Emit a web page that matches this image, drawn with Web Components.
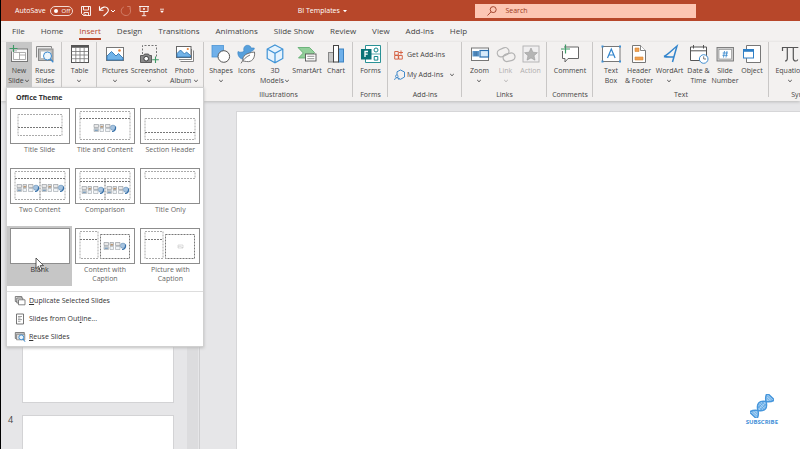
<!DOCTYPE html>
<html lang="en">
<head>
<meta charset="utf-8">
<title>BI Templates</title>
<style>
  html, body { margin: 0; height: 100%; overflow: hidden; }
  body {
    font: 7px/10px "Open Sans", "Noto Sans", sans-serif;
    color: #444;
    --brand: #b7472a;
    --bar: #f3f1f0;
    --work: #e6e6e8;
    --hover: #c6c6c6;
  }
</style>
</head>
<body>
<deck-app></deck-app>

<script>
const ICONS = {
  save: ['0 0 12 12', '<g fill="none" stroke="#fff" stroke-width=".9"><path d="M1.500 1.500h9v9h-7l-2-2z"/><path d="M3.500 1.500v3.500h5V1.500M4 10.500V7.500h4.500v3M5.800 10.500v-1.500"/></g>'],
  undo: ['0 0 12 12', '<g fill="none" stroke="#fff" stroke-width="1.100"><path d="M1.500 1.300v4h4"/><path d="M1.800 5C4 1.800 8 1 9.700 3.300s.3 4.500-4.200 7.700"/></g>'],
  redo: ['0 0 12 12', '<g fill="none" stroke="#d27f69" stroke-width="1"><path d="M7.200 1.500h3v3"/><path d="M10 3.500c1.600 3.500-.5 7-3.800 7S.8 8 1.300 5.200C1.600 3.500 2.600 2.500 3.800 2"/></g>'],
  present: ['0 0 12 12', '<g fill="none" stroke="#fff" stroke-width=".9"><path d="M1 1.500h10M2 1.500v5h8v-5M6 6.500v4M3.800 10.700h4.400M6 3v2M5 4h2"/></g>'],
  more: ['0 0 6 6', '<path d="M1 1.200h4" stroke="#fff" stroke-width=".8"/><path d="M1 2.800h4L3 5z" fill="#fff"/>'],
  caret: ['0 0 6 6', '<path d="M1 2h4L3 4.300z" fill="#fff"/>'],
  chevLight: ['0 0 6 6', '<path d="M1 2l2 2 2-2" fill="none" stroke="#fff"/>'],
  chevron: ['0 0 6 6', '<path d="M1.200 2l1.800 1.700L4.800 2" fill="none" stroke="currentColor" stroke-width=".9"/>'],
  search: ['0 0 12 12', '<g fill="none" stroke="#9c3a22" stroke-width=".9"><circle cx="7.200" cy="4.600" r="3"/><path d="M5 6.900L1.500 10.500"/></g>'],
  newslide: ['0 0 20 20', '<rect x="2.500" y="5" width="16" height="12.500" fill="#fafafa" stroke="#777"/><path d="M4.500 8.500h12v7h-12zM10.500 8.500v7M10.500 11h6" fill="#fff" stroke="#999" stroke-width=".8"/><rect x="1" y="3" width="7" height="4.500" fill="#c6c6c6"/><path d="M4.500 1v7M.5 4.500h8" stroke="#3f9a67" stroke-width="1.100"/>'],
  reuse: ['0 0 20 20', '<path d="M1.500 13.500v-11h15v2" fill="#e9e9e9" stroke="#888"/><rect x="3.500" y="5" width="14.500" height="11.500" fill="#bbb" stroke="#888"/><rect x="6" y="7.500" width="9.500" height="6.500" fill="#fff"/><circle cx="12.500" cy="12" r="4" fill="#eef6fc" stroke="#3d8bd0"/><path d="M15.300 15l3 3.300" stroke="#3d8bd0" stroke-width="1.300"/>'],
  table: ['0 0 20 20', '<rect x="1.500" y="1.500" width="17" height="17" fill="#fff" stroke="#555"/><path d="M1.500 2.500h17" stroke="#555" stroke-width="2.500"/><path d="M1.500 7.500h17M1.500 11h17M1.500 14.700h17M5.800 3v15.500M10 3v15.500M14.200 3v15.500" stroke="#777" stroke-width=".8"/>'],
  pictures: ['0 0 20 20', '<rect x="1.500" y="3.500" width="17" height="13" fill="#fff" stroke="#777"/><path d="M2 16v-4l4.500-4.500 4.500 4.500 2.500-2.500 4.500 4.500v2z" fill="#72b3e8" stroke="#3277b4" stroke-width=".9"/><circle cx="14.500" cy="6.500" r="1.300" fill="#e8833a"/>'],
  screenshot: ['0 0 20 20', '<path d="M3.500 10V1.500h14V13" fill="none" stroke="#666" stroke-width=".9" stroke-dasharray="2 1.500"/><path d="M1.500 11.500h3l1-1.500h4l1 1.500h2v7h-11z" fill="#888" stroke="#444" stroke-width=".8"/><circle cx="7.200" cy="14.700" r="2.300" fill="#fff" stroke="#333" stroke-width=".9"/><path d="M16.500 12.500v6.500M13.200 15.800h6.600" stroke="#3f9a67" stroke-width="1.100"/>'],
  album: ['0 0 20 20', '<path d="M5.500 17.500h13v-11M4 15.500h12.500V5" fill="#fff" stroke="#777" stroke-width=".9"/><rect x="1.500" y="2.500" width="14.500" height="11" fill="#fff" stroke="#666"/><path d="M2 13V9.500l3.500-3.500L9.500 10l2-2 4 3.500V13z" fill="#72b3e8" stroke="#3277b4" stroke-width=".9"/><circle cx="12.800" cy="5" r="1.100" fill="#e8833a"/>'],
  shapes: ['0 0 20 20', '<rect x="1" y="1.500" width="11.500" height="11.500" fill="#6fb0ea" stroke="#4b94d4" stroke-width=".8"/><circle cx="12.800" cy="12.500" r="5.800" fill="#fff" stroke="#555"/>'],
  icons: ['0 0 20 20', '<path d="M1 7.500c1.500 1 4 1 6-.2C6 3.500 8 1.300 10.500 1.300c2 0 3.200 1 3.600 2.700h3.200c0 1.800-1.500 3-3.200 3.300-.2 3-1 8-6 8.200C3.500 15.700 0 12 1 7.500z" fill="#57a0dc" stroke="#3a83c2" stroke-width=".6"/><path d="M6 17C5 12 9 9 17.500 8c.8 6-2.500 10.500-8 9.500-1.200 0-2-.5-3.500-.5z" fill="#fff" stroke="#666" stroke-width=".9"/><path d="M4 19.300c2-3.500 5-6.500 9-8.300" fill="none" stroke="#666" stroke-width=".9"/>'],
  cube: ['0 0 20 20', '<path d="M10 1l7.800 4v9.500L10 18.800l-7.800-4.300V5z" fill="#e6f3fd"/><path d="M10 1l7.800 4v9.500L10 18.800l-7.800-4.300V5zM2.200 5L10 9.300 17.800 5M10 9.300v9.500" fill="none" stroke="#3f93d6" stroke-width="1.200"/>'],
  smartart: ['0 0 20 20', '<path d="M1 3.500h11.500l5 5-4.500 5.500H1.500l4.800-5z" fill="#93cf9b" stroke="#57a868" stroke-width=".8"/><rect x="8.500" y="10" width="10.500" height="7" fill="#fff" stroke="#555" stroke-width=".9"/><path d="M10.300 12.300h7M10.300 14.700h7" stroke="#777" stroke-width=".8"/>'],
  chart: ['0 0 20 20', '<rect x="2.500" y="8.500" width="5" height="9.500" fill="#c8c8c8" stroke="#888"/><rect x="12.500" y="5" width="5" height="13" fill="#6fb0ea" stroke="#3d83c2"/><rect x="7.500" y="1.500" width="5" height="16.500" fill="#fff" stroke="#444"/>'],
  forms: ['0 0 20 20', '<path d="M4.500 1.500h15v17h-15z" fill="#fff" stroke="#12868a" stroke-width=".9"/><path d="M10 10h9.500" stroke="#12868a" stroke-width=".7"/><circle cx="15" cy="6" r="2" fill="none" stroke="#12868a"/><path d="M13.200 12.500h3.600v3.600h-3.600z" fill="none" stroke="#12868a"/><rect x="0" y="5" width="10.500" height="10.500" fill="#0a7377"/><path d="M7 7.500H4v5.500M4 10.200h2.700" fill="none" stroke="#fff" stroke-width="1.300"/>'],
  getadd: ['0 0 10 10', '<g fill="none" stroke="#d4593a" stroke-width=".9"><path d="M.7 1.500h3.600v3.600H.7zM.7 5.500h3.600v3.600H.7zM4.700 5.500h3.600v3.600H4.700zM7 .5v4M5 2.500h4"/></g>'],
  myadd: ['0 0 12 12', '<path d="M6.500 1l4 2v5l-4 2.300-3-1.600" fill="none" stroke="#2f7fc6" stroke-width=".9"/><path d="M3 6V2.800L6.500 1" fill="none" stroke="#2f7fc6" stroke-width=".9"/><circle cx="2.800" cy="7.300" r="1.300" fill="none" stroke="#2f7fc6" stroke-width=".8"/><path d="M.6 11c0-3 4.400-3 4.400 0" fill="none" stroke="#2f7fc6" stroke-width=".8"/>'],
  zoom: ['0 0 20 20', '<rect x="1.500" y="4" width="17" height="12.500" fill="#fff" stroke="#777"/><rect x="2.500" y="7" width="6.500" height="5.500" fill="#5a97cc"/><path d="M5 7.500v4.500M6.800 7.500v4.500" stroke="#355f89" stroke-width=".7"/><rect x="10" y="6.500" width="8.500" height="6.500" fill="#d7eafa" stroke="#2a6fb0" stroke-width="1.200"/>'],
  link: ['0 0 20 20', '<g fill="none" stroke="#b3b3b3" stroke-width="1.200"><rect x="1" y="4.500" width="12" height="7.500" rx="3.700" transform="rotate(-24 7 8)"/><rect x="7" y="9.500" width="12" height="7.500" rx="3.700" transform="rotate(-14 13 13)"/></g>'],
  action: ['0 0 20 20', '<rect x="2" y="2" width="16" height="16" fill="#f0eff0" stroke="#b0b0b0" stroke-width=".9"/><path d="M10 4l1.900 4.200 4.500.5-3.400 3 1 4.500L10 13.900l-4 2.300 1-4.500-3.400-3 4.500-.5z" fill="#b5b5b5" stroke="#9a9a9a" stroke-width=".6"/>'],
  comment: ['0 0 20 20', '<path d="M4 3h14.500v11.500H8L5 18v-3.500H2.500V7" fill="#fff" stroke="#666"/><path d="M5.500.500v9M1 5h9" stroke="#3f9a67" stroke-width="1.200"/>'],
  textbox: ['0 0 20 20', '<rect x="1.500" y="2.500" width="17.500" height="15" fill="#fff" stroke="#777"/><path d="M6.500 14L10.300 5l3.800 9M7.800 11h5" fill="none" stroke="#3184cc" stroke-width="1.200"/><path d="M.5 1.500h2v2h-2zM18 1.500h2v2h-2zM.5 16.500h2v2h-2zM18 16.500h2v2h-2z" fill="#3f90d4"/>'],
  header: ['0 0 20 20', '<path d="M3.500 1.500h8l5 5v12h-13z" fill="#fff" stroke="#777"/><path d="M11.500 1.500v5h5" fill="#fff" stroke="#777" stroke-width=".9"/><path d="M6 4h4v3.500H6zM6 13h8v3H6z" fill="#f0a050" stroke="#d98634" stroke-width=".6"/>'],
  wordart: ['0 0 20 20', '<path d="M4 12.500C8 10.500 13 5 17 2l-4.500 16M4 12.500c2 .8 7 .5 10 .500" fill="none" stroke="#3184cc" stroke-width="1.500"/>'],
  date: ['0 0 20 20', '<path d="M1.500 3h16v13.500h-16z" fill="#fff" stroke="#555"/><path d="M1.500 6.800h16M4.500 1v3.500M14.500 1v3.500" stroke="#555"/><circle cx="14.700" cy="15" r="4.300" fill="#fff" stroke="#3184cc" stroke-width=".9"/><path d="M14.700 12.300V15h2.300" fill="none" stroke="#555" stroke-width=".8"/>'],
  number: ['0 0 20 20', '<rect x="2" y="3.500" width="16.500" height="13.500" fill="#ccc" stroke="#777" stroke-width=".9"/><rect x="4" y="5.500" width="12.500" height="9.500" fill="#fff" stroke="#888" stroke-width=".6"/><path d="M9.500 7l-1 6.500M12 7l-1 6.500M7.700 9h5.300M7.400 11.300h5.300" stroke="#3184cc" stroke-width=".8"/>'],
  object: ['0 0 20 20', '<path d="M4.500 1.500h14v17h-14z" fill="#fff" stroke="#777"/><rect x="1.500" y="5.500" width="10" height="8.500" fill="#fff" stroke="#2f7fc6"/><path d="M1.500 6.700h10" stroke="#2f7fc6" stroke-width="2.200"/>'],
  pi: ['0 0 20 20', '<path d="M2.500 7V3.500h15.800M7.300 4v10.500c0 1.500-.7 2.500-2.300 2.500M13.300 4v10.500c0 1.500.5 2.500 2.700 2.500 1 0 1.500-.5 1.700-1.500" fill="none" stroke="#555" stroke-width="1.200"/>'],
  duplicate: ['0 0 12 12', '<g fill="#e4e4e4" stroke="#666" stroke-width=".8"><path d="M1.300 1.500h6.500v5H1.300z"/><path d="M2.800 3h6v5h-6z"/><path d="M4.500 4.800h6.500v5H4.500z" fill="#fff"/></g>'],
  outline: ['0 0 12 12', '<path d="M2.500 1h7v10h-7z" fill="#fff" stroke="#666" stroke-width=".9"/><path d="M4 3.500h4M4 5h2.500M4 6.600h4M4 8.300h2.500" stroke="#777" stroke-width=".7"/>'],
  reusesm: ['0 0 12 12', '<path d="M1.300 1.500h9v6h-9z" fill="#ccc" stroke="#666" stroke-width=".8"/><path d="M2.500 3.300h8.300v5.500H2.500z" fill="#ddd" stroke="#777" stroke-width=".7"/><circle cx="7.300" cy="6.300" r="2.400" fill="#eef6fc" stroke="#3184cc" stroke-width=".9"/><path d="M9 8l2 2.700" stroke="#3184cc"/>'],
  pointer: ['0 0 10 15', '<path d="M1 1v10.500l2.500-2.300 1.800 4.200 1.700-.8-1.800-4h3.300z" fill="#fff" stroke="#333" stroke-width=".8"/>'],
  helix: ['0 0 24 24', '<g transform="translate(12 12) rotate(-47)"><path d="M-13-5C-10-4.500-8-3-6 0c2-3 3.500-4.500 6-4.500S4 -3 6 0c2-3 4-4.500 7-5V5C10 4.500 8 3 6 0 4 3 2.500 4.500 0 4.500S-4 3-6 0c-2 3-4 4.500-7 5z" fill="#a9d2f4" stroke="#4696dc" stroke-width="1.500" stroke-linejoin="round"/><path d="M-11-3.500v7M-9-2v4M-3-3v6M-1-4v8M1-4v8M3-3v6M9-2v4M11-3.500v7M-4-1.500h8M-4 1.500h8" stroke="#4f9ee0" stroke-width=".7"/></g>']
};

const cluster = (x, y) => `<g transform="translate(${x - 11} ${y - 4})" stroke-width=".5">
  <path d="M0 .5h4.500v3H0zM6 .5h3.500v3H6zM11.500.5H16v3h-4.500z" fill="#e8e8e8" stroke="#777c84"/>
  <path d="M0 4.500h4.500v3H0zM6 4.500h3.500v3H6zM11.500 4.500H16v3h-4.500z" fill="#f0f3f6" stroke="#8d949c"/>
  <path d="M6.500 2h2.500v1.500H6.500z" fill="#c08a55"/><path d="M.5 5.500h3.500v1.500H.5z" fill="#6d9ac4"/>
  <circle cx="19" cy="3.700" r="2.600" fill="#a6c3df" stroke="#5a86b0"/><path d="M18 7.500c2.500 0 4-2 3.500-5" fill="none" stroke="#356fa8" stroke-width="1.200"/></g>`;

const LAYOUTS = {
  title: '<path d="M8 6.500h44v21H8z"/><path class="d" d="M8 19.500h44"/>',
  content: '<path d="M5 3.500h50v28H5z"/><path class="d" d="M5 10.500h50"/>' + cluster(30, 20),
  section: '<path d="M5 10.500h50v21H5z"/><path class="d" d="M5 24.500h50"/>',
  two: '<path d="M5 3.500h50v28H5z"/><path class="d" d="M5 10.500h50M30 10.500v21"/>' + cluster(18, 20) + cluster(43, 20),
  comparison: '<path d="M5 3.500h50v28H5zM5 10.500h50"/><path class="d" d="M5 13.500h50M30 10.500v21"/>' + cluster(18, 22) + cluster(43, 22),
  only: '<path d="M5 3.500h50v7H5z"/>',
  blank: '',
  caption: '<path d="M5 3.500h18v27H5z"/><path class="d" d="M5 11.500h18M25.500 6.500h29v24h-29z"/>' + cluster(40, 18),
  picture: '<path d="M5 3.500h18v27H5z"/><path class="d" d="M5 11.500h18M25.500 6.500h29v24h-29z"/><g><path fill="none" d="M38 17h5v3h-5zM38 19l2-1 3 2"/></g>'
};

function element(name, render) {
  customElements.define(name, class extends HTMLElement {
    connectedCallback() {
      if (this.shadowRoot) return;
      this.attachShadow({ mode: 'open' }).innerHTML = render(this);
    }
  });
}
const attr = (el, name, fallback = '') => el.getAttribute(name) ?? fallback;
const reset = 'button{font:inherit;color:inherit;background:none;border:0;padding:0;margin:0;text-align:inherit}';

element('ui-icon', el => {
  const [box, body] = ICONS[attr(el, 'name')];
  const [, , w, h] = box.split(' ');
  return `<style>:host{display:inline-block;flex:none;line-height:0;vertical-align:middle}svg{display:block}</style>
  <svg viewBox="${box}" width="${attr(el, 'w', w)}" height="${attr(el, 'h', h)}" aria-hidden="true">${body}</svg>`;
});

element('title-bar', () => `<style>${reset}
  :host{display:grid;grid-template-columns:297fr 178fr 221fr 104fr;align-items:center;height:21px;background:var(--brand);color:#fff}
  .quick{display:flex;align-items:center;padding-left:14px}
  .switch{display:flex;align-items:center;gap:4px}
  .switch input{appearance:none;margin:0;position:absolute}
  .pill{display:flex;align-items:center;gap:4px;box-sizing:border-box;width:23px;height:10px;padding-left:3px;border:1px solid #f3d9d2;border-radius:5px;font-size:6px;line-height:8px}
  .pill::before{content:"";width:4px;height:4px;border-radius:50%;background:#fff}
  .quick button{display:flex;align-items:center}
  .save{margin-left:7px}.undo{margin-left:6px}.redo{margin-left:4px}.present{margin-left:6px}.more{margin-left:9px}
  .name{display:flex;align-items:center;gap:2px}
  label.search{display:flex;align-items:center;gap:6px;height:14px;padding-left:11px;background:#fdc6b3;min-width:0}
  .search input{flex:1;min-width:0;border:0;outline:0;background:none;padding:0 0 0 1px;font:inherit;color:#8f3a24}
  .search input::placeholder{color:#9c3a22;opacity:1}
  </style>
  <div class="quick">
    <label class="switch">AutoSave<input type="checkbox" role="switch"><span class="pill">Off</span></label>
    <button class="save" aria-label="Save"><ui-icon name="save"></ui-icon></button>
    <button class="undo" aria-label="Undo"><ui-icon name="undo"></ui-icon><ui-icon name="chevLight"></ui-icon></button>
    <button class="redo" aria-label="Redo"><ui-icon name="redo"></ui-icon></button>
    <button class="present" aria-label="Start from beginning"><ui-icon name="present"></ui-icon></button>
    <button class="more" aria-label="Customize toolbar"><ui-icon name="more"></ui-icon></button>
  </div>
  <button class="name">BI Templates<ui-icon name="caret"></ui-icon></button>
  <label class="search" aria-label="Search"><ui-icon name="search"></ui-icon><input type="text" placeholder="Search"></label>`);

element('ribbon-tabs', () => `<style>
  :host{display:block;background:var(--bar)}
  nav{display:flex;gap:16px;height:21px;padding-left:11px;align-items:center;font-size:8px}
  ::slotted(*){display:block}
  </style><nav role="tablist"><slot></slot></nav>`);

element('ribbon-tab', el => `<style>${reset}
  button{display:block;height:16px;box-sizing:border-box;line-height:14px;white-space:nowrap;border-bottom:2px solid transparent}
  :host([active]) button{color:var(--brand);border-color:var(--brand)}
  </style><button role="tab" aria-selected="${el.hasAttribute('active')}"><slot></slot></button>`);

element('ribbon-bar', () => `<style>
  :host{display:flex;align-items:stretch;background:var(--bar);padding:0 0 1px 5px;overflow:hidden;box-shadow:0 1px 3px #bbb;position:relative}
  </style><slot></slot>`);

element('ribbon-group', el => `<style>
  :host{display:flex;flex:none;flex-direction:column;padding:0 ${attr(el, 'pad', '0')};position:relative}
  :host::after{content:"";position:absolute;right:0;top:0;bottom:3px;width:1px;background:#c9c7c6}
  .items{display:flex;height:46px}
  .label{height:10px;padding-top:2px;text-align:center;white-space:nowrap}
  </style><div class="items"><slot></slot></div><div class="label">${attr(el, 'label')}</div>`);

element('ribbon-button', el => `<style>${reset}
  :host{display:block;width:${attr(el, 'w')}px}
  button{display:flex;flex-direction:column;align-items:center;width:100%;height:46px;padding-top:2px;text-align:center;white-space:nowrap}
  :host([active]) button{background:var(--hover)}
  :host([disabled]) button{color:#b0aeae}
  span{margin-top:2px}
  </style><button ${el.hasAttribute('disabled') ? 'disabled' : ''}><ui-icon name="${attr(el, 'icon')}"></ui-icon><span><slot></slot></span></button>`);

element('addin-button', el => `<style>${reset}
  button{display:flex;align-items:center;gap:1px;height:20px;white-space:nowrap}
  .drop{margin-left:5px}
  .mark{width:12px}
  </style><button><ui-icon class="mark" name="${attr(el, 'icon')}"></ui-icon><slot></slot>${el.hasAttribute('drop') ? '<ui-icon class="drop" name="chevron"></ui-icon>' : ''}</button>`);

element('layout-tile', el => `<style>${reset}
  :host{display:block}
  button{display:flex;flex-direction:column;align-items:center;width:100%;height:60px;padding:2px;text-align:center;color:#666}
  :host([active]) button{background:var(--hover);color:#333}
  .sheet{display:block;flex:none;width:60px;height:36px;border:1px solid #8d8d8d;box-sizing:border-box;background:#fff}
  svg{display:block;margin:-1px}
  svg > path{fill:none;stroke:#aaa;stroke-width:1;stroke-dasharray:2 1}
  svg > path.d{stroke:#777}
  g{stroke:#bbb;stroke-width:.5}
  .text{line-height:9px;padding-top:1px}
  </style><button><span class="sheet"><svg viewBox="0 0 60 36" width="60" height="36" aria-hidden="true">${LAYOUTS[attr(el, 'layout')]}</svg></span><span class="text"><slot></slot></span></button>`);

element('menu-row', el => `<style>${reset}
  button{display:flex;align-items:center;gap:3px;width:100%;height:18px;padding-left:7px;color:#333}
  </style><button role="menuitem"><ui-icon name="${attr(el, 'icon')}"></ui-icon><span><slot></slot></span></button>`);

element('layout-menu', () => `<style>
  :host{display:block;box-sizing:border-box;background:#fff;border:1px solid #d0d0d0;box-shadow:0 1px 3px #bbb}
  h2{margin:0;padding:5px 9px 3px;font-size:7px;line-height:10px;font-weight:700;color:#333}
  .grid{display:grid;grid-template-columns:repeat(3,1fr)}
  .rows{margin-top:5px;border-top:1px solid #ddd}
  </style>
  <h2>Office Theme</h2>
  <div class="grid">
    <layout-tile layout="title">Title Slide</layout-tile>
    <layout-tile layout="content">Title and Content</layout-tile>
    <layout-tile layout="section">Section Header</layout-tile>
    <layout-tile layout="two">Two Content</layout-tile>
    <layout-tile layout="comparison">Comparison</layout-tile>
    <layout-tile layout="only">Title Only</layout-tile>
    <layout-tile layout="blank" active>Blank</layout-tile>
    <layout-tile layout="caption">Content with<br>Caption</layout-tile>
    <layout-tile layout="picture">Picture with<br>Caption</layout-tile>
  </div>
  <div class="rows" role="menu">
    <menu-row icon="duplicate"><u>D</u>uplicate Selected Slides</menu-row>
    <menu-row icon="outline">Slides from Out<u>l</u>ine...</menu-row>
    <menu-row icon="reusesm"><u>R</u>euse Slides</menu-row>
  </div>`);

element('slide-thumb', el => `<style>
  :host{display:grid;grid-template-columns:14px 1fr;font-size:9px}
  .page{height:86px;box-sizing:border-box;background:#fff;border:1px solid #d3d3d5}
  </style><span>${attr(el, 'number')}</span><div class="page"></div>`);

element('slide-panel', () => `<style>
  :host{display:flex;box-sizing:border-box;overflow:hidden;border-right:1px solid #cfcfd1}
  .list{flex:1;display:flex;flex-direction:column;gap:12px;padding:20px 13px 0 7px}
  .track{width:11px;margin-right:1px;background:#dcdcde}
  </style>
  <div class="list"><slide-thumb></slide-thumb><slide-thumb></slide-thumb><slide-thumb></slide-thumb><slide-thumb number="4"></slide-thumb></div>
  <div class="track"></div>`);

element('slide-canvas', () => `<style>
  :host{display:flex;padding:10px 0 0 36px}
  .page{flex:1;background:#fff;border:solid #d6d6d8;border-width:1px 0 0 1px}
  </style><div class="page"></div>`);

element('subscribe-mark', () => `<style>
  :host{display:flex;flex-direction:column;align-items:center;gap:1px;color:#3f8fd8;font:700 6px/6px "Open Sans",sans-serif}
  </style><ui-icon name="helix"></ui-icon><span>SUBSCRIBE</span>`);

element('deck-app', () => `<style>
  :host{display:flex;flex-direction:column;height:100vh;box-sizing:border-box;border-left:1px solid #000;background:var(--work);position:relative;overflow:hidden}
  .work{flex:1;display:grid;grid-template-columns:199px 1fr;min-height:0}
  layout-menu{position:absolute;left:5px;top:87px;width:198px}
  subscribe-mark{position:absolute;right:22px;bottom:24px}
  .pointer{position:absolute;left:34px;top:257px}
  ribbon-bar{flex:none}
  .addins{width:62px;padding-top:3px}
  </style>
  <title-bar></title-bar>
  <ribbon-tabs>
    <ribbon-tab>File</ribbon-tab><ribbon-tab>Home</ribbon-tab><ribbon-tab active>Insert</ribbon-tab><ribbon-tab>Design</ribbon-tab><ribbon-tab>Transitions</ribbon-tab><ribbon-tab>Animations</ribbon-tab><ribbon-tab>Slide Show</ribbon-tab><ribbon-tab>Review</ribbon-tab><ribbon-tab>View</ribbon-tab><ribbon-tab>Add-ins</ribbon-tab><ribbon-tab>Help</ribbon-tab>
  </ribbon-tabs>
  <ribbon-bar>
    <ribbon-group pad="4px 0 0">
      <ribbon-button w="26" icon="newslide" active>New<br>Slide<ui-icon name="chevron"></ui-icon></ribbon-button>
      <ribbon-button w="26" icon="reuse">Reuse<br>Slides</ribbon-button>
    </ribbon-group>
    <ribbon-group><ribbon-button w="35" icon="table">Table<br><ui-icon name="chevron"></ui-icon></ribbon-button></ribbon-group>
    <ribbon-group pad="1px">
      <ribbon-button w="34" icon="pictures">Pictures<br><ui-icon name="chevron"></ui-icon></ribbon-button>
      <ribbon-button w="34" icon="screenshot">Screenshot<br><ui-icon name="chevron"></ui-icon></ribbon-button>
      <ribbon-button w="37" icon="album">Photo<br>Album <ui-icon name="chevron"></ui-icon></ribbon-button>
    </ribbon-group>
    <ribbon-group pad="4px" label="Illustrations">
      <ribbon-button w="26" icon="shapes">Shapes<br><ui-icon name="chevron"></ui-icon></ribbon-button>
      <ribbon-button w="25" icon="icons">Icons</ribbon-button>
      <ribbon-button w="32" icon="cube">3D<br>Models<ui-icon name="chevron"></ui-icon></ribbon-button>
      <ribbon-button w="32" icon="smartart">SmartArt</ribbon-button>
      <ribbon-button w="26" icon="chart">Chart</ribbon-button>
    </ribbon-group>
    <ribbon-group label="Forms"><ribbon-button w="35" icon="forms">Forms</ribbon-button></ribbon-group>
    <ribbon-group pad="6px" label="Add-ins">
      <div class="addins">
        <addin-button icon="getadd">Get Add-ins</addin-button>
        <addin-button icon="myadd" drop>My Add-ins</addin-button>
      </div>
    </ribbon-group>
    <ribbon-group pad="4px" label="Links">
      <ribbon-button w="27" icon="zoom">Zoom<br><ui-icon name="chevron"></ui-icon></ribbon-button>
      <ribbon-button w="25" icon="link" disabled>Link<br><ui-icon name="chevron"></ui-icon></ribbon-button>
      <ribbon-button w="25" icon="action" disabled>Action</ribbon-button>
    </ribbon-group>
    <ribbon-group label="Comments"><ribbon-button w="46" icon="comment">Comment</ribbon-button></ribbon-group>
    <ribbon-group pad="4px" label="Text">
      <ribbon-button w="28" icon="textbox">Text<br>Box</ribbon-button>
      <ribbon-button w="28" icon="header">Header<br>&amp; Footer</ribbon-button>
      <ribbon-button w="33" icon="wordart">WordArt<br><ui-icon name="chevron"></ui-icon></ribbon-button>
      <ribbon-button w="25" icon="date">Date &amp;<br>Time</ribbon-button>
      <ribbon-button w="28" icon="number">Slide<br>Number</ribbon-button>
      <ribbon-button w="26" icon="object">Object</ribbon-button>
    </ribbon-group>
    <ribbon-group pad="2px" label="Symbols"><ribbon-button w="38" icon="pi">Equation<br><ui-icon name="chevron"></ui-icon></ribbon-button><div style="width:30px"></div></ribbon-group>
  </ribbon-bar>
  <div class="work"><slide-panel></slide-panel><slide-canvas></slide-canvas></div>
  <layout-menu></layout-menu>
  <ui-icon class="pointer" name="pointer"></ui-icon>
  <subscribe-mark></subscribe-mark>`);
</script>
</body>
</html>
